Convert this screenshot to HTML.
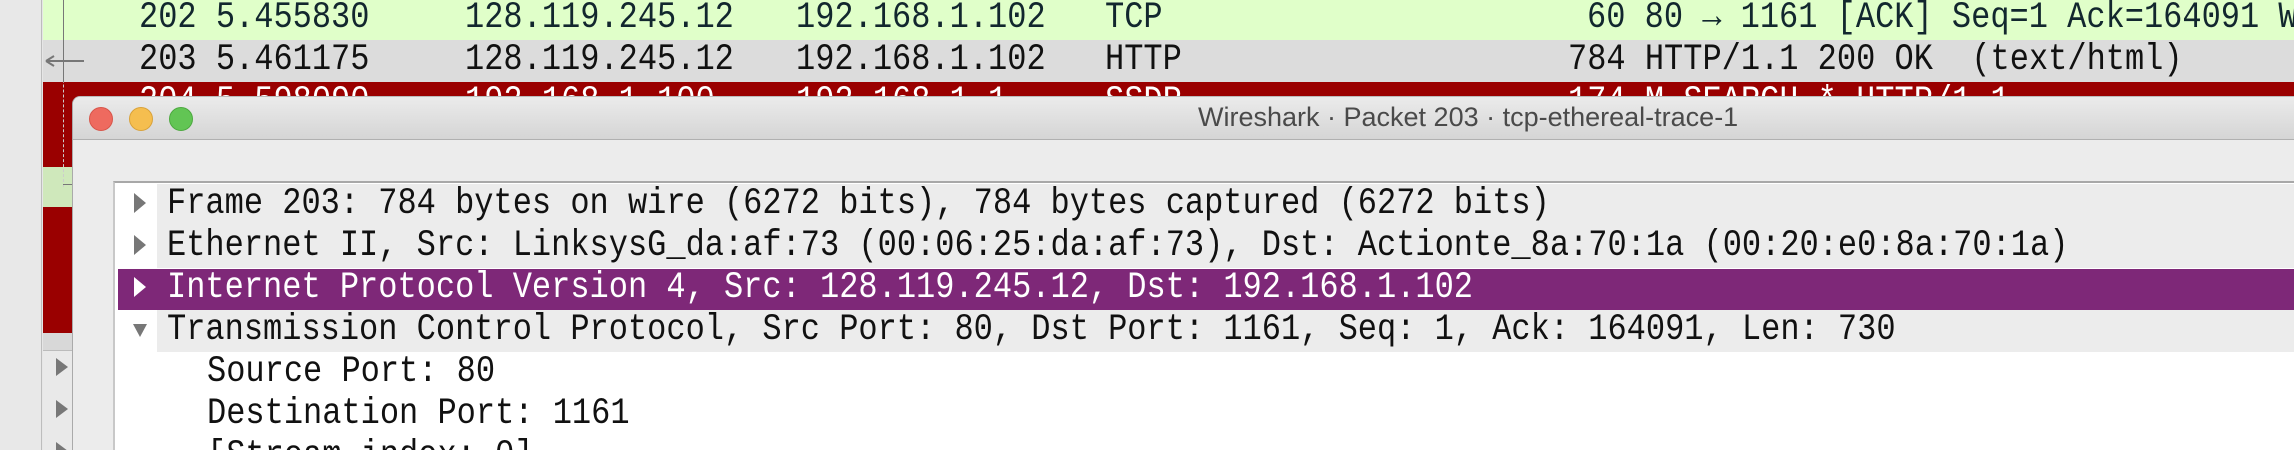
<!DOCTYPE html>
<html><head><meta charset="utf-8"><style>
*{margin:0;padding:0;box-sizing:border-box}
html,body{width:2294px;height:450px;overflow:hidden}
body{background:#e6e6e6;font-family:"Liberation Mono",monospace}
#wrap{position:relative;width:2294px;height:450px;overflow:hidden}
.abs{position:absolute}
.t{position:absolute;white-space:pre;font-size:37px;line-height:42px;transform:scaleX(0.865);transform-origin:0 0}
</style></head><body><div id="wrap">
<div class="abs" style="left:0;top:0;width:42px;height:450px;background:#e8e8e8;border-right:1px solid #bdbdbd"></div>
<div class="abs" style="left:43px;top:0;width:2251px;height:40px;background:#e0ffc9"></div>
<div class="abs" style="left:43px;top:40px;width:2251px;height:42px;background:#dcdcdc"></div>
<div class="abs" style="left:43px;top:82px;width:2251px;height:251px;background:#9a0000"></div>
<div class="abs" style="left:43px;top:167px;width:30px;height:40px;background:#cfe8bb"></div>
<div class="abs" style="left:43px;top:333px;width:30px;height:17px;background:#d8d8d8"></div>
<div class="abs" style="left:43px;top:350px;width:30px;height:100px;background:#e9e9e9;border-top:1px solid #bbb"></div>
<svg class="abs" style="left:50px;top:355px" width="22" height="95"><path d="M6 3 L18 12 L6 21Z M6 45 L18 54 L6 63Z M6 87 L18 96 L6 105Z" fill="#777"/></svg>
<div class="abs" style="left:63px;top:0;width:0;height:187px;border-left:1px dashed #ccc"></div>
<div class="abs" style="left:63px;top:0;width:1px;height:82px;background:#777"></div>
<div class="abs" style="left:63px;top:184px;width:10px;height:1px;background:#777"></div>
<svg class="abs" style="left:44px;top:54px" width="42" height="14"><path d="M2 7 H40 M2 7 L10 2 M2 7 L10 12" stroke="#777" stroke-width="2" fill="none"/></svg>
<div class="t" style="left:139px;top:-3px;color:#12272e">202 5.455830</div>
<div class="t" style="left:465px;top:-3px;color:#12272e">128.119.245.12</div>
<div class="t" style="left:796px;top:-3px;color:#12272e">192.168.1.102</div>
<div class="t" style="left:1105px;top:-3px;color:#12272e">TCP</div>
<div class="t" style="left:1587px;top:-3px;color:#12272e">60 80 → 1161 [ACK] Seq=1 Ack=164091 Win</div>
<div class="t" style="left:139px;top:39px;color:#111">203 5.461175</div>
<div class="t" style="left:465px;top:39px;color:#111">128.119.245.12</div>
<div class="t" style="left:796px;top:39px;color:#111">192.168.1.102</div>
<div class="t" style="left:1105px;top:39px;color:#111">HTTP</div>
<div class="t" style="left:1568px;top:39px;color:#111">784 HTTP/1.1 200 OK  (text/html)</div>
<div class="t" style="left:139px;top:81px;color:#fff">204 5.598090</div>
<div class="t" style="left:465px;top:81px;color:#fff">192.168.1.100</div>
<div class="t" style="left:796px;top:81px;color:#fff">192.168.1.1</div>
<div class="t" style="left:1105px;top:81px;color:#fff">SSDP</div>
<div class="t" style="left:1568px;top:81px;color:#fff">174 M-SEARCH * HTTP/1.1</div>
<div class="abs" style="left:72px;top:96px;width:2222px;height:354px;background:#ececec;border-radius:8px 0 0 0;border-left:1px solid #aaa;border-top:1px solid #bbb;overflow:hidden">
 <div class="abs" style="left:0;top:0;width:100%;height:43px;background:linear-gradient(#ebebeb,#d5d5d5);border-bottom:1px solid #b0b0b0"></div>
 <div class="abs" style="left:16px;top:10px;width:24px;height:24px;border-radius:50%;background:#ee6a5f;border:1px solid #d8554a"></div>
 <div class="abs" style="left:56px;top:10px;width:24px;height:24px;border-radius:50%;background:#f5be4f;border:1px solid #d9a23a"></div>
 <div class="abs" style="left:96px;top:10px;width:24px;height:24px;border-radius:50%;background:#62c554;border:1px solid #4ca93f"></div>
 <div class="abs" style="left:1125px;top:5px;width:700px;font-family:'Liberation Sans',sans-serif;font-size:27px;color:#4a4a4a;white-space:nowrap">Wireshark · Packet 203 · tcp-ethereal-trace-1</div>
 <div class="abs" style="left:40px;top:84px;width:2200px;height:280px;background:#fff;border-top:2px solid #a8a8a8;border-left:2px solid #c8c8c8">
  <div class="abs" style="left:42px;top:1px;width:2200px;height:84px;background:#ececec"></div>
  <div class="abs" style="left:3px;top:86px;width:2200px;height:41px;background:#7e2878"></div>
  <div class="abs" style="left:42px;top:127px;width:2200px;height:42px;background:#ececec"></div>
  <svg class="abs" style="left:18px;top:0" width="20" height="170"><path d="M1 10 L13 20 L1 30Z M1 52 L13 62 L1 72Z" fill="#777"/><path d="M1 94 L13 104 L1 114Z" fill="#fff"/><path d="M0 141 L14 141 L7 154Z" fill="#777"/></svg>
 </div>
</div>
<div class="t" style="left:167px;top:183px;color:#111">Frame 203: 784 bytes on wire (6272 bits), 784 bytes captured (6272 bits)</div>
<div class="t" style="left:167px;top:225px;color:#111">Ethernet II, Src: LinksysG_da:af:73 (00:06:25:da:af:73), Dst: Actionte_8a:70:1a (00:20:e0:8a:70:1a)</div>
<div class="t" style="left:167px;top:267px;color:#fff">Internet Protocol Version 4, Src: 128.119.245.12, Dst: 192.168.1.102</div>
<div class="t" style="left:167px;top:309px;color:#111">Transmission Control Protocol, Src Port: 80, Dst Port: 1161, Seq: 1, Ack: 164091, Len: 730</div>
<div class="t" style="left:207px;top:351px;color:#111">Source Port: 80</div>
<div class="t" style="left:207px;top:393px;color:#111">Destination Port: 1161</div>
<div class="abs" style="left:207px;top:435px;width:600px;height:15px;overflow:hidden"><div class="t" style="left:0;top:0;color:#111">[Stream index: 0]</div></div>
</div></body></html>
